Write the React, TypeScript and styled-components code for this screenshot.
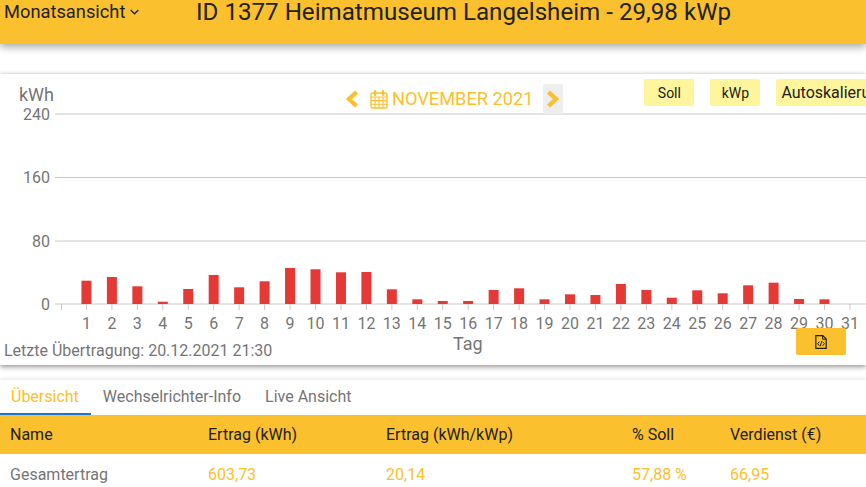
import React from "react";
import styled, { createGlobalStyle } from "styled-components";

const GlobalStyle = createGlobalStyle`
  html, body { margin: 0; padding: 0; height: 100%; background: #fff; overflow: hidden; }
  body { font-family: Roboto, "Liberation Sans", sans-serif; }
`;

const YELLOW = "#fbc02d";
const GREY = "#757575";

const Page = styled.div`
  width: 866px;
  height: 487px;
  overflow: hidden;
  display: flex;
  flex-direction: column;
`;
const Header = styled.header`
  height: 44px;
  flex: none;
  background: ${YELLOW};
  display: flex;
  align-items: flex-start;
  padding-left: 4px;
  color: #212121;
  box-shadow: 0 3px 8px rgba(0, 0, 0, 0.35);
  position: relative;
`;
const ViewMenu = styled.div`
  width: 136px;
  flex: none;
  display: flex;
  align-items: center;
  gap: 5px;
  font-size: 18.3px;
  line-height: 24px;
  height: 24px;
`;
const Title = styled.h1`
  margin: 0 0 0 56px;
  font-size: 24.15px;
  line-height: 24px;
  font-weight: 400;
  white-space: nowrap;
`;
const Card = styled.section`
  margin-top: 30px;
  height: 291px;
  flex: none;
  background: #fff;
  box-shadow: 0 2px 5px rgba(0, 0, 0, 0.4), 0 -1px 3px rgba(0, 0, 0, 0.08);
  display: flex;
  flex-direction: column;
`;
const Toolbar = styled.div`
  height: 34px;
  flex: none;
  display: flex;
  align-items: flex-start;
  padding: 5px 0 0 19px;
  box-sizing: border-box;
  position: relative;
  z-index: 1;
`;
const Unit = styled.div`
  width: 34px;
  margin-top: 4px;
  color: ${GREY};
  font-size: 18px;
  line-height: 24px;
  flex: none;
`;
const MonthNav = styled.div`
  margin: 5px 0 0 292px;
  height: 30px;
  flex: none;
  display: flex;
  align-items: center;
  color: ${YELLOW};
  font-size: 18.2px;
  white-space: nowrap;
`;
const PrevArrow = styled.span`
  width: 25px;
  display: flex;
  align-items: center;
`;
const Month = styled.span`
  margin-left: 4px;
  line-height: 30px;
`;
const NextArrow = styled.span`
  width: 20px;
  height: 30px;
  margin-left: 10px;
  background: #eeeeee;
  border-radius: 2px;
  display: flex;
  align-items: center;
  justify-content: center;
`;
const Toggles = styled.div`
  margin-left: 81px;
  display: flex;
  gap: 16px;
  flex: none;
`;
const Toggle = styled.button<{ $wide?: boolean }>`
  width: ${(p) => (p.$wide ? "auto" : "50px")};
  height: 27px;
  padding: 0 5px;
  border: 0;
  border-radius: 2px;
  background: #fff59d;
  color: #212121;
  font-family: inherit;
  font-size: ${(p) => (p.$wide ? "16px" : "14px")};
  white-space: nowrap;
  flex: none;
`;
const ChartSvg = styled.svg`
  display: block;
  flex: none;
  overflow: visible;
`;
const AxisText = styled.text`
  font-family: Roboto, "Liberation Sans", sans-serif;
  font-size: 16px;
  fill: ${GREY};
`;
const Footer = styled.div`
  flex: 1;
  display: flex;
  position: relative;
  padding-left: 4px;
`;
const LastUpload = styled.div`
  width: 449px;
  flex: none;
  margin-top: 14px;
  color: ${GREY};
  font-size: 16px;
  line-height: 18px;
  white-space: nowrap;
`;
const AxisName = styled.div`
  width: 343px;
  flex: none;
  margin-top: 3px;
  color: ${GREY};
  font-size: 18px;
  line-height: 26px;
`;
const ExportButton = styled.button`
  width: 50px;
  height: 27px;
  padding: 0;
  border: 0;
  border-radius: 2px;
  background: ${YELLOW};
  display: flex;
  align-items: center;
  justify-content: center;
  flex: none;
`;
const TabPanel = styled.section`
  margin-top: 15px;
  flex: 1;
  background: #fff;
  box-shadow: 0 -1px 4px rgba(0, 0, 0, 0.1);
  position: relative;
`;
const TabBar = styled.nav`
  height: 35px;
  display: flex;
`;
const Tab = styled.div<{ $active?: boolean }>`
  padding: 0 12px 0 ${(p) => (p.$active ? "11px" : "12px")};
  height: 35px;
  box-sizing: border-box;
  line-height: 33px;
  font-size: 16px;
  white-space: nowrap;
  color: ${(p) => (p.$active ? YELLOW : GREY)};
  border-bottom: 2px solid ${(p) => (p.$active ? "#1976d2" : "transparent")};
`;
const Row = styled.div<{ $head?: boolean }>`
  height: ${(p) => (p.$head ? "39px" : "40px")};
  display: grid;
  grid-template-columns: 198px 178px 246px 98px 1fr;
  align-items: center;
  padding-left: 10px;
  font-size: 16px;
  background: ${(p) => (p.$head ? YELLOW : "#fff")};
  color: ${(p) => (p.$head ? "#212121" : YELLOW)};
`;
const NameCell = styled.div`
  color: ${GREY};
`;

const yields = [23.3, 27, 17.7, 2.3, 15, 29, 16.7, 22.7, 36, 34.7, 31.7, 32, 14.7, 4.7, 3, 3, 14, 15.7, 4.7, 9.7, 9, 20, 14, 6.3, 13.7, 10.7, 18.7, 21.3, 5, 4.7];
const days = Array.from({ length: 31 }, (_, i) => i + 1);
const dayX = (d: number) => 61 + 25.45 * d;
const grid = [
  { label: "240", y: 114 },
  { label: "160", y: 177.5 },
  { label: "80", y: 241 },
  { label: "0", y: 304 },
];

const Chevron = ({ dir }: { dir: "left" | "right" }) => (
  <svg width="14" height="18" viewBox="0 0 14 18">
    <polyline
      points={dir === "left" ? "11.5,2 4,9 11.5,16" : "2.5,2 10,9 2.5,16"}
      fill="none"
      stroke={YELLOW}
      strokeWidth="4.4"
    />
  </svg>
);

const CalendarIcon = () => (
  <svg width="18" height="19" viewBox="0 0 18 19" fill="none" stroke={YELLOW} strokeWidth="1.4">
    <rect x="1" y="3" width="16" height="15" rx="1.5" />
    <path d="M1 7h16M1 10.6h16M1 14.3h16M5 7v11M9 7v11M13 7v11" strokeWidth="1.1" />
    <path d="M5 1.2v3.6M13 1.2v3.6" strokeWidth="2.4" strokeLinecap="round" />
  </svg>
);

const DownIcon = () => (
  <svg width="9" height="6" viewBox="0 0 9 6" fill="none" stroke="#212121" strokeWidth="1.3">
    <polyline points="0.7,1 4.5,4.8 8.3,1" />
  </svg>
);

const FileCodeIcon = () => (
  <svg width="12" height="14" viewBox="0 0 12 14" fill="none" stroke="#212121" strokeWidth="1.2">
    <path d="M0.8 0.7h7l3.4 3.4v9.2H0.8z" />
    <path d="M7.6 0.7v3.5h3.6" strokeWidth="1" />
    <path d="M4.4 6.6L2.6 8.7l1.8 2.1M7.6 6.6l1.8 2.1-1.8 2.1M6.6 6.2L5.4 11.2" strokeWidth="1" />
  </svg>
);

export default function App() {
  return (
    <Page>
      <GlobalStyle />
      <Header>
        <ViewMenu>
          Monatsansicht <DownIcon />
        </ViewMenu>
        <Title>ID 1377 Heimatmuseum Langelsheim - 29,98 kWp</Title>
      </Header>
      <Card>
        <Toolbar>
          <Unit>kWh</Unit>
          <MonthNav>
            <PrevArrow>
              <Chevron dir="left" />
            </PrevArrow>
            <CalendarIcon />
            <Month>NOVEMBER 2021</Month>
            <NextArrow>
              <Chevron dir="right" />
            </NextArrow>
          </MonthNav>
          <Toggles>
            <Toggle>Soll</Toggle>
            <Toggle>kWp</Toggle>
            <Toggle $wide>Autoskalierung</Toggle>
          </Toggles>
        </Toolbar>
        <ChartSvg width="866" height="220" viewBox="0 108 866 220">
          {grid.map((g) => (
            <g key={g.label}>
              <line x1="55" x2="866" y1={g.y} y2={g.y} stroke="#c8c8c8" strokeWidth="1" />
              <AxisText x="50" y={g.y + 5.5} textAnchor="end">
                {g.label}
              </AxisText>
            </g>
          ))}
          <line x1="61.5" x2="61.5" y1="304" y2="310" stroke="#c8c8c8" />
          {days.map((d) => (
            <g key={d}>
              <line x1={dayX(d)} x2={dayX(d)} y1="304" y2="310" stroke="#c8c8c8" />
              <AxisText x={dayX(d)} y="329" textAnchor="middle">
                {d}
              </AxisText>
            </g>
          ))}
          {yields.map((h, i) => (
            <rect key={i} x={dayX(i + 1) - 5} y={304 - h} width="10" height={h} fill="#e53935" />
          ))}
        </ChartSvg>
        <Footer>
          <LastUpload>Letzte Übertragung: 20.12.2021 21:30</LastUpload>
          <AxisName>Tag</AxisName>
          <ExportButton aria-label="Export">
            <FileCodeIcon />
          </ExportButton>
        </Footer>
      </Card>
      <TabPanel>
        <TabBar>
          <Tab $active>Übersicht</Tab>
          <Tab>Wechselrichter-Info</Tab>
          <Tab>Live Ansicht</Tab>
        </TabBar>
        <Row $head>
          <div>Name</div>
          <div>Ertrag (kWh)</div>
          <div>Ertrag (kWh/kWp)</div>
          <div>% Soll</div>
          <div>Verdienst (€)</div>
        </Row>
        <Row>
          <NameCell>Gesamtertrag</NameCell>
          <div>603,73</div>
          <div>20,14</div>
          <div>57,88 %</div>
          <div>66,95</div>
        </Row>
      </TabPanel>
    </Page>
  );
}
